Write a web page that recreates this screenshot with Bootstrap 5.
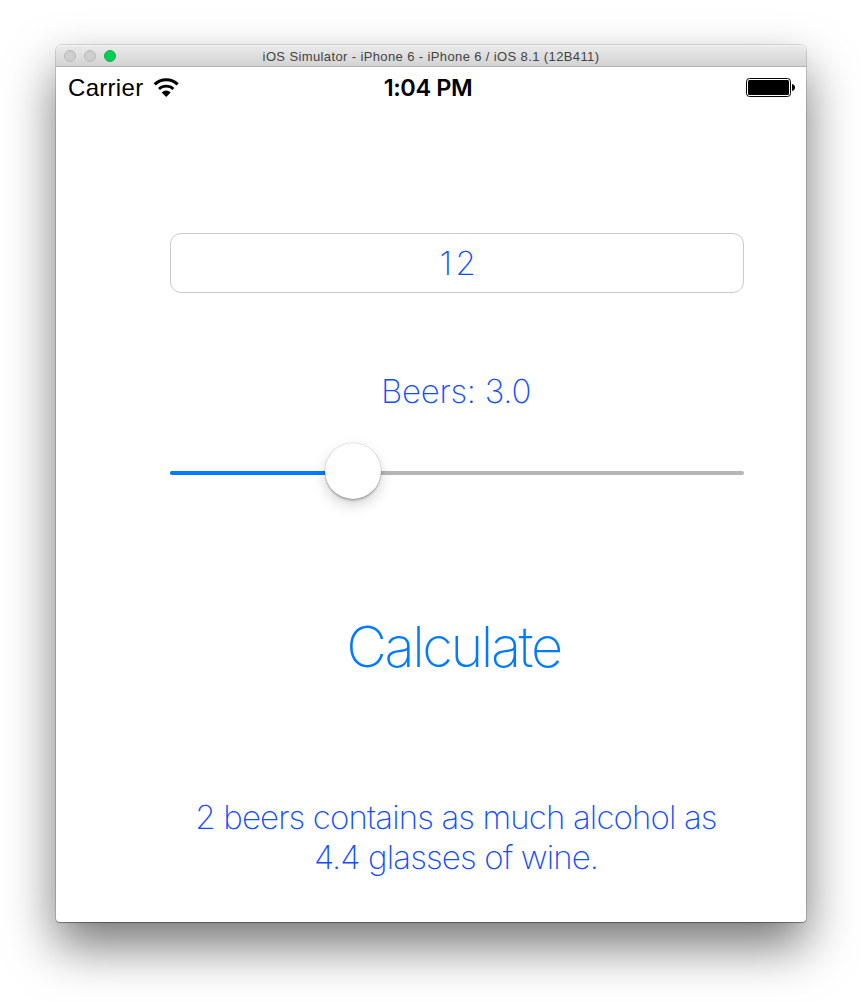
<!DOCTYPE html>
<html lang="en">
<head>
<meta charset="utf-8">
<meta name="viewport" content="width=device-width, initial-scale=1">
<title>iOS Simulator</title>
<link href="https://cdn.jsdelivr.net/npm/bootstrap@5.3.0/dist/css/bootstrap.min.css" rel="stylesheet">
<style>
  body { background: #fff; font-family: "Liberation Sans", Arial, sans-serif; height: 1002px; overflow: hidden; }
  .sim-window {
    width: 750px; height: 877px; margin: 45px 0 0 56px;
    border-radius: 6px 6px 4px 4px;
    box-shadow: 0 0 0 1px rgba(0,0,0,.13), 0 1px 1px rgba(0,0,0,.3), 0 24px 50px rgba(0,0,0,.54);
  }
  .title-bar {
    height: 22px; padding-left: 8px; gap: 8px;
    background: linear-gradient(#ebebeb, #d3d3d3);
    border-bottom: 1px solid #b1b1b1; border-radius: 6px 6px 0 0;
    box-shadow: inset 0 1px 0 #f4f4f4;
  }
  .light { width: 12px; height: 12px; border-radius: 50%; background: #cecece; border: 1px solid #b9b9b9; }
  .light-on { background: #05cc56; border-color: #14ae46; }
  .window-title { left: 0; right: 0; top: 3px; font: 13px/17px "Liberation Sans", Arial, sans-serif; letter-spacing: .38px; color: #444; }
  .status-bar { height: 41px; padding: 0 11px 0 12px; color: #000; font-size: 24px; line-height: 41px; }
  .carrier { letter-spacing: .3px; }
  .clock { left: 0; right: 0; top: 0; padding-right: 6px; font: 600 23.5px/41px "Inter", sans-serif; letter-spacing: -.4px; }
  .content { margin: 125px 62px 0 114px; font-family: "Inter", "Helvetica Neue", sans-serif; font-weight: 200; color: #124dff; font-size: 33px; }
  .amount { height: 60px; border: 1px solid #cbcbcb; border-radius: 11px; font: inherit; color: inherit; padding: 0 0 0 5px; letter-spacing: 3.5px; }
  .beers { margin-top: 76px; padding-right: 2px; line-height: 44px; letter-spacing: -.25px; }
  .slider { height: 58px; margin-top: 29px; }
  .track { height: 4px; margin-top: 4px; background: #b6b6b6; border-radius: 2px; }
  .track-fill { background: #007aff; border-radius: 2px; }
  .thumb { width: 56px; height: 56px; top: 1px; background: #fff; box-shadow: 0 0 0 .5px rgba(0,0,0,.16), 0 2px 2px rgba(0,0,0,.2), 0 6px 14px rgba(0,0,0,.17); }
  .calc { margin-top: 111px; margin-bottom: 1px; color: #007aff; font: 200 56px/72px "Inter", sans-serif; letter-spacing: -2.45px; padding-right: 7px !important; }
  .result { margin-top: 113px; padding-right: 2px; line-height: 40px; letter-spacing: -.86px; }
</style>
</head>
<body>
<main class="sim-window bg-white">
  <header class="title-bar d-flex align-items-center position-relative">
    <span class="light"></span><span class="light"></span><span class="light light-on"></span>
    <div class="window-title position-absolute text-center text-nowrap">iOS Simulator - iPhone 6 - iPhone 6 / iOS 8.1 (12B411)</div>
  </header>
  <div class="status-bar d-flex align-items-center justify-content-between position-relative">
    <div class="d-flex align-items-center">
      <span class="carrier">Carrier</span>
      <svg class="ms-2" width="30" height="22" viewBox="0 0 30 22" fill="none" stroke="#000">
        <path d="M3.700 7.400a16.500 16.500 0 0 1 23 0" stroke-width="3"/>
        <path d="M8 12a10.500 10.500 0 0 1 14.400 0" stroke-width="2.800"/>
        <path d="M10.700 15.400a6.300 6.300 0 0 1 9 0L15.200 20z" fill="#000" stroke="none"/>
      </svg>
    </div>
    <div class="clock position-absolute text-center">1:04 PM</div>
    <svg width="49" height="19" viewBox="0 0 49 19">
      <rect x=".5" y=".5" width="44" height="18" rx="3" fill="#fff" stroke="#000"/>
      <rect x="2" y="2" width="41" height="15" rx="1.5"/>
      <path d="M46 6c4 .5 4 6.500 0 7z"/>
    </svg>
  </div>
  <section class="content d-flex flex-column">
    <input class="amount w-100 text-center" type="text" value="12" aria-label="Amount">
    <div class="beers text-center">Beers: 3.0</div>
    <div class="slider d-flex align-items-center position-relative">
      <div class="track w-100"><div class="track-fill h-100" style="width:31.8%"></div></div>
      <div class="thumb position-absolute rounded-circle" style="left:155px"></div>
    </div>
    <button class="calc btn border-0 p-0" type="button">Calculate</button>
    <div class="result text-center">2 beers contains as much alcohol as<br>4.4 glasses of wine.</div>
  </section>
</main>
<script src="https://cdn.jsdelivr.net/npm/bootstrap@5.3.0/dist/js/bootstrap.bundle.min.js"></script>
</body>
</html>
